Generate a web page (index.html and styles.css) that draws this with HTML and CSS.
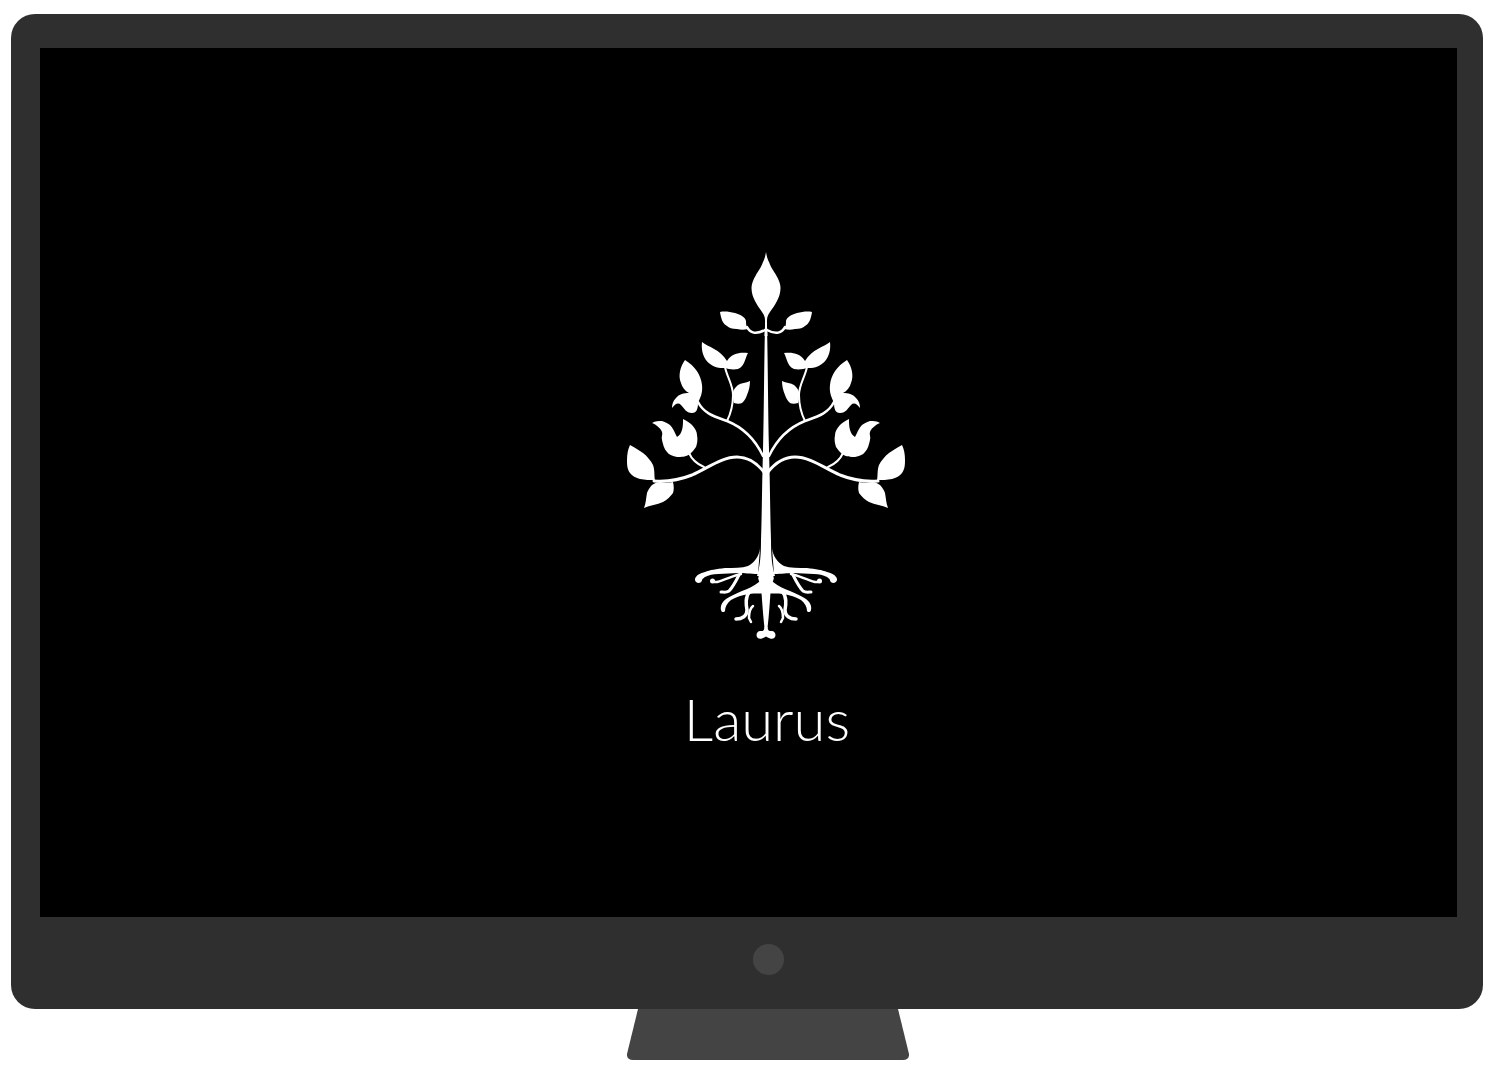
FILE: index.html
```html
<!DOCTYPE html>
<html lang="en">
<head>
<meta charset="utf-8">
<title>Laurus</title>
<link rel="stylesheet" href="styles.css">
</head>
<body>
<div class="display">
  <div class="monitor">
    <main class="screen">
      <svg class="tree" viewBox="620 245 292 400" width="292" height="400" aria-label="Laurus tree logo">
        <defs>
          <g id="half">
            <!-- top bud -->
            <path d="M766 252C765 258 764 260 763 262C761 268 758 271 756 275C753 280 751.500 284 751.500 288C751.500 293 753 297 755 301C757 305 760 309 762 312C764 315 765 317 765 320L767 322Z"/>
            <!-- top side leaf and curl -->
            <path d="M720 312C725 311 730 312 735 313C741 315 745 317 746 321C746 324 746 326 748 329C744 330 741 330 737 329C732 329 729 328 727 326C723 324 721 319 720 312Z"/>
            <path class="line w25" d="M747 327C750 333 756 335 765 330"/>
            <path d="M767 318V336H764.500C764.500 330 765 325 767 318Z"/>
            <!-- upper pair -->
            <path d="M702 342C708 347 720 349 727 361C732 353 740 352 748 353C745 358 745 366 738 369C733 370 728 369 725 368C712 369 700 360 702 342Z"/>
            <path class="line w2" d="M725 367C727 377 733 385 733 395C733 405 731 413 727 421"/>
            <path d="M750 381C746 383 741 383 738 385C735 388 733 390 733 393C733 397 733 400 734 403C737 404 740 404 742 403C745 400 746 398 747 395C749 390 750 386 750 381Z"/>
            <!-- mid bud -->
            <path d="M685 360C680 367 678 376 681 383C682 387 685 391 689 393C684 393 679 394 676 398C673 401 672 404 672 408C675 404 678 402 681 405C684 408 686 413 692 413C697 413 698 408 698 403C700 398 703 393 702 385C701 375 695 366 685 360Z"/>
            <path class="line w25" d="M698 402C704 414 716 417 727 421C742 427 754 437 763 456"/>
            <!-- tulip -->
            <path d="M652 423C655 421 659 421 662 421C666 422 668 424 670 425C673 428 674 431 675 433L677 437C680 435 681 433 682 430C683 426 683 423 683 419C687 421 690 423 692 425C695 428 697 432 697 435C698 440 697 444 696 447C694 450 692 452 690 454C686 457 681 457 677 457C673 456 669 455 667 452C664 449 663 444 662 440C661 437 663 434 662 432C661 429 657 425 652 423Z"/>
            <path class="line w2" d="M689 453C692 460 697 464 704 467"/>
            <!-- main low branch -->
            <path class="line w3" d="M654 481C668 482 682 479 692 475C708 468 722 457 737 457C748 457 756 462 764 472"/>
            <!-- lowest leaves -->
            <path d="M630 445C635 448 639 450 643 453C647 456 651 461 653 465C655 470 654 476 655 480C650 480 645 480 640 479C636 478 632 476 630 473C627 469 627 464 627 460C627 454 628 449 630 445Z"/>
            <path d="M673 482C674 486 674 490 673 493C670 497 667 500 663 502C657 505 650 505 644 508C646 503 646 498 647 493C648 490 650 487 652 485C655 483 657 482 660 482C665 483 669 483 673 482Z"/>
            <!-- trunk half -->
            <path d="M765 326H767V576H757C760 566 761 556 761 540C762 510 762 480 763 450C764 410 764 370 765 326Z"/>
            <!-- upper roots -->
            <path d="M760 548C759 556 755 562 748 566C742 568 734 568 725 568C716 569 710 570 705 572C700 573 697 575 696 577C694 579 695 582 698 583C701 583 702 581 702 580C703 578 704 578 705 577C709 575 713 574 718 574C725 574 732 573 738 573C745 573 750 574 758 574Z"/>
            <path class="line w25" d="M741 574C735 575 727 579 717 582L714 582"/>
            <circle cx="712.500" cy="581" r="2.500"/>
            <path class="line w3" d="M739 575C736 581 733 587 729 591C726 593 723 592 721 592"/>
            <circle cx="766" cy="578.500" r="7.500"/>
            <!-- lower roots -->
            <path d="M766 581L759 582C754 586 748 589 742 591C736 594 730 596 726 599C722 602 720 606 721 610C721 612 724 613 725 611C725 607 727 603 731 600C736 597 742 595 749 594C755 593 761 594 766 593Z"/>
            <path class="line w35" d="M750 591C745 597 746 604 747 610C747 616 742 619 736 619"/>
            <path class="line w25" d="M753 606C749 609 749 614 749 618L751 622"/>
            <!-- spike and foot -->
            <path d="M766 585H761C762 600 763 615 764.500 628H766Z"/>
            <path d="M764.500 627C764 630 763.500 631.500 761 631C758.500 630.500 756.500 632.500 756.500 635C756.500 638 759 639.500 762 638.500C763.500 638 765 637 766 636.500V627Z"/>
          </g>
        </defs>
        <use href="#half"/>
        <use href="#half" transform="matrix(-1 0 0 1 1532 0)"/>
      </svg>
      <h1 class="title">Laurus</h1>
    </main>
    <div class="bezel"><span class="camera"></span></div>
  </div>
  <svg class="stand" viewBox="0 0 282 51" width="282" height="51" aria-hidden="true">
    <path d="M11 0H271L282 45Q282.500 51 276 51H6Q-0.500 51 0 45Z"/>
  </svg>
</div>
</body>
</html>
```

FILE: styles.css
```css
* { box-sizing: border-box; }

html, body {
  margin: 0;
  background: #fff;
}

.display {
  width: 1472.5px;
  margin: 14px 0 0 10.5px;
  display: flex;
  flex-direction: column;
  align-items: flex-start;
}

.monitor {
  width: 100%;
  height: 995px;
  padding: 34px 26px 0 29.5px;
  background: #2f2f2f;
  border-radius: 24px;
  display: flex;
  flex-direction: column;
}

.screen {
  height: 869px;
  background: #000;
  padding: 197px 0 0 37px;
  display: flex;
  flex-direction: column;
  align-items: center;
}

.tree {
  display: block;
  flex: none;
  fill: #fff;
  margin-left: -3px;
}

.line {
  fill: none;
  stroke: #fff;
  stroke-linecap: round;
}
.w2 { stroke-width: 2; }
.w25 { stroke-width: 2.5; }
.w3 { stroke-width: 3; }
.w35 { stroke-width: 3.5; }

.title {
  margin: 38px 0 0;
  font: 300 58px/72px Lato, "Open Sans", sans-serif;
  color: #fff;
}

.bezel {
  flex: 1;
  display: flex;
  justify-content: center;
  padding: 27px 0 0 40px;
}

.camera {
  width: 31px;
  height: 31px;
  border-radius: 50%;
  background: #444;
}

.stand {
  display: block;
  margin: 0 0 0 616.5px;
  fill: #444;
}
```
